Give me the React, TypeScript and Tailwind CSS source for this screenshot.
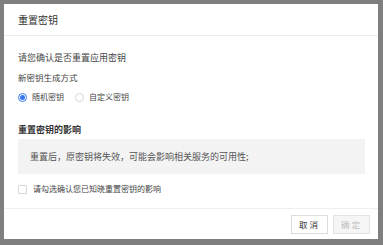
import React from "react";

export default function App() {
  return (
    <div
      className="w-[383px] h-[245px] bg-[#7f7f7f] pt-[4px] pl-[4px] overflow-hidden"
      style={{ fontFamily: '"Noto Sans CJK SC", "Noto Sans", sans-serif' }}
    >
      <div className="w-[374px] h-[235px] bg-white flex flex-col">
        <div className="h-[32px] flex items-center pl-[14px] border-b border-[#ececec] text-[10px] text-[#333]">
          重置密钥
        </div>
        <div className="flex-1 flex flex-col pl-[14px] pr-[13px]">
          <div className="h-[22px] mt-[11px] flex items-center text-[9px] text-[#444]">请您确认是否重置应用密钥</div>
          <div className="h-[16px] flex items-center text-[8.5px] text-[#444]">新密钥生成方式</div>
          <div className="h-[24px] flex items-center text-[8px] text-[#444]">
            <span className="w-[9px] h-[9px] rounded-full border border-[#3a78f0] flex items-center justify-center mr-[5px]">
              <span className="w-[5px] h-[5px] rounded-full bg-[#3a78f0]" />
            </span>
            <span>随机密钥</span>
            <span className="w-[9px] h-[9px] rounded-full border border-[#d6d6d6] ml-[11px] mr-[5px]" />
            <span>自定义密钥</span>
          </div>
          <div className="h-[18px] mt-[12px] flex items-center text-[9px] font-bold text-[#333]">重置密钥的影响</div>
          <div className="h-[35px] bg-[#f3f3f3] flex items-center pl-[12px] text-[9px] text-[#555]">
            重置后，原密钥将失效，可能会影响相关服务的可用性;
          </div>
          <div className="h-[30px] flex items-center gap-[6px] text-[8px] text-[#444]">
            <span className="w-[9px] h-[9px] rounded-[1px] border border-[#d6d6d6]" />
            <span>请勾选确认您已知晓重置密钥的影响</span>
          </div>
        </div>
        <div className="h-[31px] border-t border-[#efefef] flex items-center justify-end gap-[5px] pr-[8px]">
          <button className="w-[37px] h-[19px] border border-[#dcdcdc] bg-white text-[8.5px] text-[#333] tracking-[2px] flex items-center justify-center">
            取消
          </button>
          <button className="w-[37px] h-[19px] border border-[#e4e4e4] bg-[#f5f5f5] text-[8.5px] text-[#bdbdbd] tracking-[2px] flex items-center justify-center">
            确定
          </button>
        </div>
      </div>
    </div>
  );
}
